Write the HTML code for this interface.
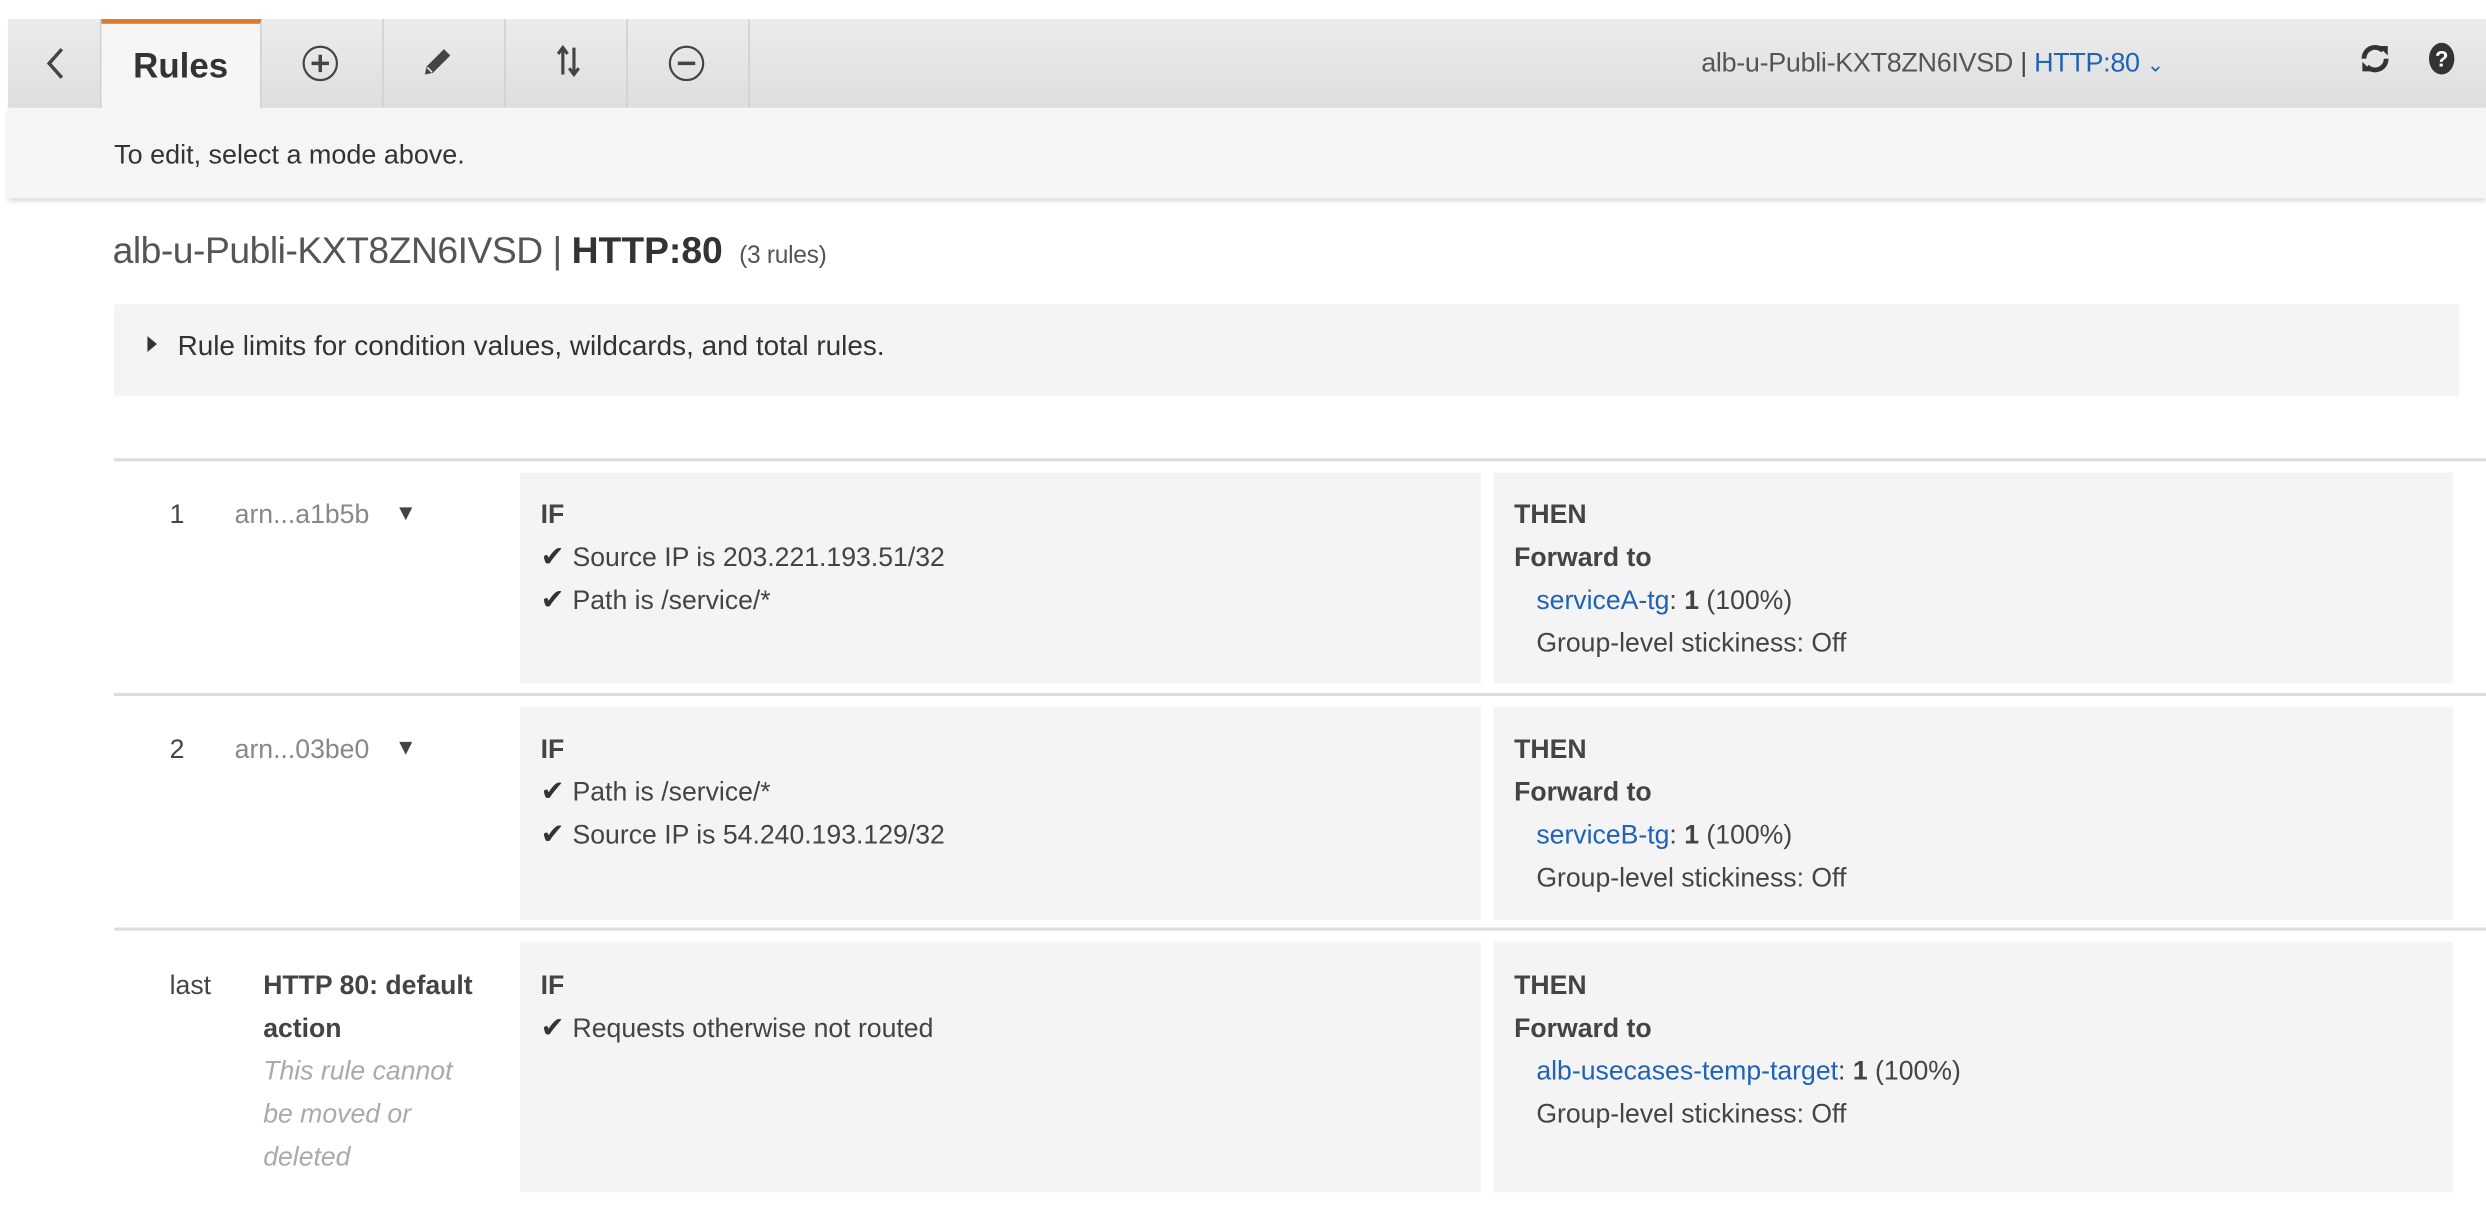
<!DOCTYPE html>
<html><head><meta charset="utf-8"><style>
html,body{margin:0;padding:0;background:#fff;width:2486px;height:1216px;overflow:hidden}
#w{position:absolute;left:0;top:0;width:1568px;height:767px;transform:scale(1.5855);transform-origin:0 0;font-family:"Liberation Sans",Arial,sans-serif;color:#444}
.a{position:absolute;white-space:nowrap}
.bar{position:absolute;left:5px;top:12px;width:1563px;height:56px;background:linear-gradient(#ececec,#dedede)}
.tab{position:absolute;top:12px;height:56px;border-right:1px solid #d0d0d0}
.sub{position:absolute;left:5px;top:68px;width:1563px;height:57px;background:#f5f5f5;box-shadow:0 2px 3px rgba(0,0,0,.15)}
.box{position:absolute;background:#f4f4f4}
.sep{position:absolute;left:72px;width:1496px;height:2px;background:#dddddd}
.t{font-size:16.8px;line-height:27px}
.b{font-weight:bold}
.lk{color:#1f62b8}
.ck{font-size:18px;margin-right:5px;font-family:"DejaVu Sans",sans-serif;color:#333}
</style></head><body><div id="w">
<div class="bar"></div>
<div class="tab" style="left:5px;width:58px"></div>
<div class="tab" style="left:64px;width:100px;background:#f6f6f6;border-top:3px solid #dd7a2b;height:53px"></div>
<div class="tab" style="left:165px;width:76px"></div>
<div class="tab" style="left:242px;width:76px"></div>
<div class="tab" style="left:319px;width:76px"></div>
<div class="tab" style="left:396px;width:76px"></div>
<svg class="a" style="left:28px;top:29px" width="14" height="22"><path d="M11 2 L3 11 L11 20" fill="none" stroke="#444" stroke-width="2.2"/></svg>
<div class="a b" style="left:84px;top:29px;font-size:22px;color:#333">Rules</div>
<svg class="a" style="left:190px;top:28px" width="24" height="24"><circle cx="12" cy="12" r="10.5" fill="none" stroke="#444" stroke-width="1.4"/><path d="M12 6.5v11M6.5 12h11" stroke="#444" stroke-width="2.2"/></svg>
<svg class="a" style="left:266px;top:29px" width="20" height="20"><path d="M2 18 L3 13 L14 2 L18 6 L7 17 Z" fill="#444"/><path d="M3.5 13.5 L6.5 16.5" stroke="#eee" stroke-width="1"/></svg>
<svg class="a" style="left:350px;top:28px" width="18" height="22"><path d="M5 2v17M2 6l3-4 3 4M12 2v17M9 15l3 4 3-4" fill="none" stroke="#444" stroke-width="2"/></svg>
<svg class="a" style="left:421px;top:28px" width="24" height="24"><circle cx="12" cy="12" r="10.5" fill="none" stroke="#444" stroke-width="1.4"/><path d="M6.5 12h11" stroke="#444" stroke-width="2.2"/></svg>
<div class="a" style="left:1073px;top:30px;font-size:17px;color:#555;letter-spacing:-0.2px">alb-u-Publi-KXT8ZN6IVSD <span style="color:#444">|</span> <span class="lk">HTTP:80</span> <span class="lk" style="font-size:13px">&#8964;</span></div>
<svg class="a" style="left:1488px;top:27px" width="20" height="20"><path d="M15 5 A7 7 0 0 0 3 10 M5 15 A7 7 0 0 0 17 10" fill="none" stroke="#333" stroke-width="3"/><path d="M12 2 L18 2 L18 8 Z M8 18 L2 18 L2 12 Z" fill="#333"/></svg>
<svg class="a" style="left:1531px;top:26px" width="18" height="22"><ellipse cx="9" cy="11" rx="8" ry="10" fill="#333"/><text x="9" y="16" font-family="Liberation Sans" font-weight="bold" font-size="14" fill="#fff" text-anchor="middle">?</text></svg>
<div class="sub"></div>
<div class="a" style="left:72px;top:88px;font-size:17px;color:#333">To edit, select a mode above.</div>
<div class="a" style="left:71px;top:145px;font-size:23.5px;color:#555;letter-spacing:-0.3px">alb-u-Publi-KXT8ZN6IVSD | <span class="b" style="color:#333;letter-spacing:0">HTTP:80</span> <span style="font-size:15.5px;letter-spacing:-0.2px">&nbsp;(3 rules)</span></div>
<div class="box" style="left:72px;top:192px;width:1479px;height:58px"></div>
<svg class="a" style="left:92px;top:211px" width="8" height="12"><path d="M1 1 L7 6 L1 11 Z" fill="#333"/></svg>
<div class="a" style="left:112px;top:208px;font-size:17.6px;color:#333">Rule limits for condition values, wildcards, and total rules.</div>

<div class="sep" style="top:289px"></div>
<div class="sep" style="top:437px"></div>
<div class="sep" style="top:585px"></div>

<div class="box" style="left:328px;top:298px;width:606px;height:133px"></div>
<div class="box" style="left:942px;top:298px;width:605px;height:133px"></div>
<div class="box" style="left:328px;top:446px;width:606px;height:134px"></div>
<div class="box" style="left:942px;top:446px;width:605px;height:134px"></div>
<div class="box" style="left:328px;top:594px;width:606px;height:158px"></div>
<div class="box" style="left:942px;top:594px;width:605px;height:158px"></div>

<div class="a t" style="left:107px;top:311px">1</div>
<div class="a t" style="left:148px;top:311px;color:#888">arn...a1b5b</div>
<div class="a" style="left:249px;top:315px;font-size:14px;color:#444">&#9660;</div>
<div class="a t" style="left:341px;top:311px"><span class="b">IF</span><br><span class="ck">&#10004;</span>Source IP is 203.221.193.51/32<br><span class="ck">&#10004;</span>Path is /service/*</div>
<div class="a t" style="left:955px;top:311px"><span class="b">THEN</span><br><span class="b">Forward to</span><br>&nbsp;&nbsp;&nbsp;<span class="lk">serviceA-tg</span>: <b>1</b> (100%)<br>&nbsp;&nbsp;&nbsp;Group-level stickiness: Off</div>

<div class="a t" style="left:107px;top:459px">2</div>
<div class="a t" style="left:148px;top:459px;color:#888">arn...03be0</div>
<div class="a" style="left:249px;top:463px;font-size:14px;color:#444">&#9660;</div>
<div class="a t" style="left:341px;top:459px"><span class="b">IF</span><br><span class="ck">&#10004;</span>Path is /service/*<br><span class="ck">&#10004;</span>Source IP is 54.240.193.129/32</div>
<div class="a t" style="left:955px;top:459px"><span class="b">THEN</span><br><span class="b">Forward to</span><br>&nbsp;&nbsp;&nbsp;<span class="lk">serviceB-tg</span>: <b>1</b> (100%)<br>&nbsp;&nbsp;&nbsp;Group-level stickiness: Off</div>

<div class="a t" style="left:107px;top:608px">last</div>
<div class="a t" style="left:166px;top:608px"><span class="b">HTTP 80: default<br>action</span><br><i style="color:#aaa">This rule cannot<br>be moved or<br>deleted</i></div>
<div class="a t" style="left:341px;top:608px"><span class="b">IF</span><br><span class="ck">&#10004;</span>Requests otherwise not routed</div>
<div class="a t" style="left:955px;top:608px"><span class="b">THEN</span><br><span class="b">Forward to</span><br>&nbsp;&nbsp;&nbsp;<span class="lk">alb-usecases-temp-target</span>: <b>1</b> (100%)<br>&nbsp;&nbsp;&nbsp;Group-level stickiness: Off</div>
</div></body></html>
